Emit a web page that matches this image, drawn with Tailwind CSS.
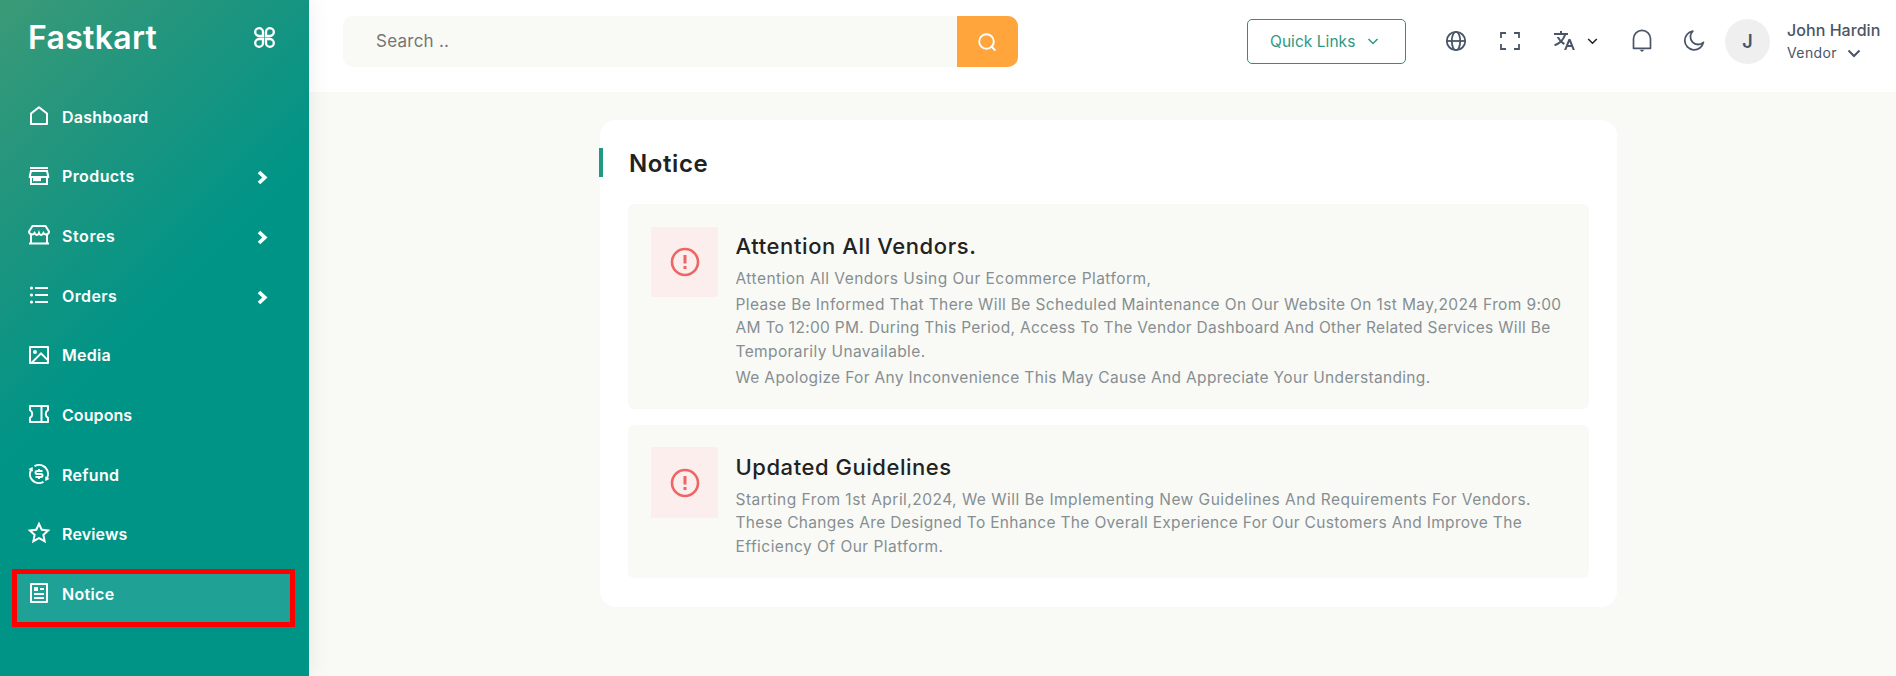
<!DOCTYPE html>
<html lang="en">
<head>
<meta charset="utf-8">
<title>Fastkart</title>
<script src="https://cdn.jsdelivr.net/npm/@tailwindcss/browser@4"></script>
</head>
<body class="font-['Inter',sans-serif]">
<div class="flex h-[676px] w-[1896px] overflow-hidden bg-[#f9faf6]">
  <aside class="relative z-10 h-full w-[309px] shrink-0 bg-[linear-gradient(135deg,#3b9a77_0px,#1e957f_165px,#009487_330px)] text-white shadow-[0_0_22px_rgba(0,0,0,0.08)]">
    <div class="flex h-[75px] items-center pl-[28px] pr-[34px]">
      <span class="text-[32px] leading-none font-semibold tracking-[0.300px]">Fastkart</span>
      <svg class="ml-auto size-[21px]" viewBox="0 0 21 21" fill="none" stroke="currentColor" stroke-width="2.300"><path d="M9 9H5a3.900 3.900 0 1 1 4-4zM12 9h4a3.900 3.900 0 1 0-4-4zM9 12H5a3.900 3.900 0 1 0 4 4zM12 12h4a3.900 3.900 0 1 1-4 4z"/></svg>
    </div>
    <nav class="mt-[12px] text-[16px] font-semibold leading-6">
      <a class="flex h-[59.6px] items-center gap-[11px] pl-[27px]"><svg class="size-6 -mt-px" viewBox="0 0 24 24" fill="currentColor"><path d="M21 20a1 1 0 0 1-1 1H4a1 1 0 0 1-1-1V9.490a1 1 0 0 1 .386-.790l8-6.222a1 1 0 0 1 1.228 0l8 6.222a1 1 0 0 1 .386.790V20zm-2-1V9.978l-7-5.444-7 5.444V19h14z"/></svg><span class="tracking-[0.240px]">Dashboard</span></a>
      <a class="flex h-[59.6px] items-center gap-[11px] pl-[27px]"><svg class="size-6 -mt-px" viewBox="0 0 24 24" fill="none" stroke="currentColor" stroke-width="2"><path d="M3 4h18M4 7h16l1.200 5v1H2.800v-1zM4 13v7h16v-7"/><path fill="currentColor" stroke="none" d="M6 14h8v3.200H6z"/></svg><span class="tracking-[0.400px]">Products</span><svg class="ml-auto mr-[41px] mt-[3px] h-[15px] w-[11px]" viewBox="0 0 11 15" fill="none" stroke="currentColor" stroke-width="3.700"><path d="M2 2l5.800 5.500L2 13"/></svg></a>
      <a class="flex h-[59.6px] items-center gap-[11px] pl-[27px]"><svg class="size-6 -mt-px" viewBox="0 0 24 24" fill="none" stroke="currentColor" stroke-width="2"><path d="M5.500 3h13L22 8.500c0 3-4 4-5.500 1.500-1.200 2.500-3.600 2.500-4.500 0-.9 2.500-3.300 2.500-4.500 0C6 12.500 2 11.500 2 8.500zM4 12v8M20 12v8M2 20.500h20"/></svg><span class="tracking-[0.600px]">Stores</span><svg class="ml-auto mr-[41px] mt-[3px] h-[15px] w-[11px]" viewBox="0 0 11 15" fill="none" stroke="currentColor" stroke-width="3.700"><path d="M2 2l5.800 5.500L2 13"/></svg></a>
      <a class="flex h-[59.6px] items-center gap-[11px] pl-[27px]"><svg class="size-6 -mt-px" viewBox="0 0 24 24" fill="currentColor"><path d="M8 4h13v2H8zM8 11h13v2H8zM8 18h13v2H8z"/><circle cx="4.500" cy="5" r="1.600"/><circle cx="4.500" cy="12" r="1.600"/><circle cx="4.500" cy="19" r="1.600"/></svg><span class="tracking-[0.400px]">Orders</span><svg class="ml-auto mr-[41px] mt-[3px] h-[15px] w-[11px]" viewBox="0 0 11 15" fill="none" stroke="currentColor" stroke-width="3.700"><path d="M2 2l5.800 5.500L2 13"/></svg></a>
      <a class="flex h-[59.6px] items-center gap-[11px] pl-[27px]"><svg class="size-6 -mt-px" viewBox="0 0 24 24" fill="currentColor"><path d="M2.992 21A.993.993 0 0 1 2 20.007V3.993A1 1 0 0 1 2.992 3h18.016c.548 0 .992.445.992.993v16.014a1 1 0 0 1-.992.993H2.992zM20 15V5H4v14L14 9l6 6zm0 2.828l-6-6L6.828 19H20v-1.172zM8 11a2 2 0 1 1 0-4 2 2 0 0 1 0 4z"/></svg><span class="tracking-[0.284px]">Media</span></a>
      <a class="flex h-[59.6px] items-center gap-[11px] pl-[27px]"><svg class="size-6 -mt-px" viewBox="0 0 24 24" fill="none" stroke="currentColor" stroke-width="2" stroke-linejoin="round"><path d="M3 4h18v4.200a4.300 4.300 0 0 0 0 7.600V20H3v-4.200a4.300 4.300 0 0 0 0-7.600zM14.500 4v16"/></svg><span class="tracking-[0.080px]">Coupons</span></a>
      <a class="flex h-[59.6px] items-center gap-[11px] pl-[27px]"><svg class="size-6 -mt-px" viewBox="0 0 24 24" fill="currentColor"><path d="M19.375 15.103A8.001 8.001 0 0 0 8.030 5.053l-.992-1.737A9.996 9.996 0 0 1 17 3.340c4.490 2.592 6.210 8.142 4.117 12.770l1.342.774-4.165 2.214-.165-4.714 1.246.719zM4.625 8.897a8.001 8.001 0 0 0 11.345 10.050l.992 1.737A9.996 9.996 0 0 1 7 20.660C2.510 18.068.790 12.518 2.883 7.890L1.540 7.117l4.165-2.214.165 4.714-1.246-.719zM8.500 14H14a.5.5 0 1 0 0-1h-4a2.500 2.500 0 1 1 0-5h1V7h2v1h2.500v2H10a.5.5 0 1 0 0 1h4a2.500 2.500 0 1 1 0 5h-1v1h-2v-1H8.500v-2z"/></svg><span class="mt-px tracking-[0.300px]">Refund</span></a>
      <a class="flex h-[59.6px] items-center gap-[11px] pl-[27px]"><svg class="size-6 -mt-px" viewBox="0 0 24 24" fill="currentColor"><path d="M12 18.260l-7.053 3.948 1.575-7.928L.588 8.792l8.027-.952L12 .5l3.386 7.340 8.027.952-5.934 5.488 1.575 7.928L12 18.260zm0-2.292l4.247 2.377-.948-4.773 3.573-3.305-4.833-.573L12 5.275l-2.038 4.420-4.833.572 3.573 3.305-.948 4.773L12 15.968z"/></svg><span class="tracking-[0.160px]">Reviews</span></a>
      <a class="relative flex h-[59.6px] items-center gap-[11px] pl-[27px]"><span class="absolute left-[11.5px] top-[5px] h-[58px] w-[283px] border-[5px] border-[#ff0000] bg-white/12"></span><svg class="relative size-6 -mt-px" viewBox="0 0 24 24" fill="currentColor"><path d="M20 22H4a1 1 0 0 1-1-1V3a1 1 0 0 1 1-1h16a1 1 0 0 1 1 1v18a1 1 0 0 1-1 1zm-1-2V4H5v16h14zM7 6h4v4H7V6zm0 6h10v2H7v-2zm0 4h10v2H7v-2zm6-9h4v2h-4V7z"/></svg><span class="relative tracking-[0.340px]">Notice</span></a>
    </nav>
  </aside>
  <div class="flex min-w-0 flex-1 flex-col">
    <header class="flex h-[92px] shrink-0 items-start bg-white pt-4 text-[#4a5568]">
      <div class="ml-[34px] flex h-[51px] w-[675px] overflow-hidden rounded-[10px] bg-[#f9faf6]">
        <div class="flex flex-1 items-center pl-[33px] text-[17px] tracking-[0.250px] text-[#757575]">Search ..</div>
        <div class="flex w-[61px] items-center justify-center bg-[#ffa53b] pr-px text-white"><svg class="size-5" viewBox="0 0 20 20" fill="none" stroke="currentColor" stroke-width="1.900" stroke-linecap="round"><circle cx="9.500" cy="9.500" r="7.300"/><path d="M14.500 14.500l3.300 3.500"/></svg></div>
      </div>
      <div class="mt-[3px] ml-[229px] flex h-[45px] items-center">
        <div class="flex h-[45px] w-[159px] items-center rounded-[5px] border border-[#1f9683] pl-[22px] text-[15.500px] text-[#2d9884]"><span class="tracking-[0.050px]">Quick Links</span><svg class="ml-[12px] h-[7px] w-[12px]" viewBox="0 0 12 7" fill="none" stroke="currentColor" stroke-width="1.500"><path d="M1.500 1L6 5.500 10.500 1"/></svg></div>
        <svg class="ml-[39px] size-[22px] -mt-px" viewBox="0 0 22 22" fill="none" stroke="currentColor" stroke-width="1.800"><circle cx="11" cy="11" r="9.200"/><ellipse cx="11" cy="11" rx="4.200" ry="9.200"/><path d="M2 11h18"/></svg>
        <svg class="ml-[31px] size-[24px] -mt-px" viewBox="0 0 24 24" fill="none" stroke="currentColor" stroke-width="1.800"><path d="M8 4H3v5M16 4h5v5M8 20H3v-5M16 20h5v-5"/></svg>
        <svg class="ml-[30px] size-6 -mt-px" viewBox="0 0 24 24" fill="currentColor"><path d="M18.500 10l4.400 11h-2.155l-1.201-3h-4.090l-1.199 3h-2.154L16.500 10h2zM10 2v2h6v2h-1.968a18.222 18.222 0 0 1-3.620 6.301 14.864 14.864 0 0 0 2.336 1.707l-.751 1.878A17.015 17.015 0 0 1 9 13.725a16.676 16.676 0 0 1-6.201 3.548l-.536-1.929a14.700 14.700 0 0 0 5.327-3.042A18.078 18.078 0 0 1 4.767 8h2.240A16.032 16.032 0 0 0 9 10.877a16.165 16.165 0 0 0 2.910-4.876L2 6V4h6V2h2zm7.500 10.885L16.253 16h2.492L17.500 12.885z"/></svg>
        <svg class="ml-[11px] h-[7px] w-[11px] -mt-px" viewBox="0 0 11 7" fill="none" stroke="#222" stroke-width="1.500"><path d="M1.200 1l4.300 4.300L9.800 1"/></svg>
        <svg class="ml-[32px] size-6 -mt-px" viewBox="0 0 24 24" fill="none" stroke="currentColor" stroke-width="1.700" stroke-linejoin="round"><path d="M3.500 19.300v-9.500a8.500 8.500 0 0 1 17 0v9.500z"/><path d="M9.500 20.800h5L12 23z" fill="currentColor" stroke="none"/></svg>
        <svg class="ml-[28px] size-6 -mt-px" viewBox="0 0 24 24" fill="none" stroke="currentColor" stroke-width="1.800" stroke-linejoin="round"><path d="M10.800 2.200a9.400 9.400 0 1 0 10.600 11.200A7.500 7.500 0 0 1 10.800 2.200z"/></svg>
        <div class="ml-[19px] flex size-[45px] items-center justify-center rounded-full bg-[#efefef] text-[18px] font-semibold">J</div>
        <div class="ml-[17px] mt-px flex flex-col">
          <span class="text-[16px] leading-[22px] font-medium tracking-[0.050px]">John Hardin</span>
          <span class="flex items-center text-[14px] leading-[24px]"><span class="tracking-[0.400px]">Vendor</span><svg class="ml-[10px] h-[9px] w-[14px]" viewBox="0 0 14 9" fill="none" stroke="currentColor" stroke-width="2"><path d="M1.500 1.500L7 7l5.500-5.500"/></svg></span>
        </div>
      </div>
    </header>
    <main class="flex flex-1 pt-[28px] pl-[291px]">
      <section class="relative h-[487px] w-[1017px] rounded-2xl bg-white px-[28px] pt-[28px]">
        <span class="absolute -left-px top-[28px] h-[29px] w-1 bg-[#1f9983]"></span>
        <h1 class="ml-px text-[24px] leading-[31px] font-semibold tracking-[0.600px] text-[#222]">Notice</h1>
        <article class="mt-[25px] flex h-[205px] w-[961px] gap-[17.5px] rounded-md bg-[#f9faf6] p-[23px]">
          <div class="flex h-[70px] w-[67px] shrink-0 items-center justify-center bg-[#fbeeec]"><svg class="size-[30px]" viewBox="0 0 30 30" fill="none" stroke="#ed6565" stroke-width="2.600"><circle cx="15" cy="15" r="13"/><path stroke-width="3" d="M15 8v8.500M15 19v3"/></svg></div>
          <div class="pt-[5px] whitespace-nowrap">
            <h2 class="text-[22px] leading-[28px] font-medium tracking-[0.597px] text-[#222]">Attention All Vendors.</h2>
            <div class="mt-[7px] text-[15.500px] leading-[23.400px] text-[#868e92]">
              <p class="tracking-[0.459px]">Attention All Vendors Using Our Ecommerce Platform,</p>
              <p class="mt-[2.500px]"><span class="tracking-[0.368px]">Please Be Informed That There Will Be Scheduled Maintenance On Our Website On 1st May,2024 From 9:00</span><br><span class="tracking-[0.307px]">AM To 12:00 PM. During This Period, Access To The Vendor Dashboard And Other Related Services Will Be</span><br><span class="tracking-[0.378px]">Temporarily Unavailable.</span></p>
              <p class="mt-[2.500px] tracking-[0.329px]">We Apologize For Any Inconvenience This May Cause And Appreciate Your Understanding.</p>
            </div>
          </div>
        </article>
        <article class="mt-4 flex h-[153px] w-[961px] gap-[17.5px] rounded-md bg-[#f9faf6] px-[23px] pt-[22px]">
          <div class="flex h-[71px] w-[67px] shrink-0 items-center justify-center bg-[#fbeeec]"><svg class="size-[30px]" viewBox="0 0 30 30" fill="none" stroke="#ed6565" stroke-width="2.600"><circle cx="15" cy="15" r="13"/><path stroke-width="3" d="M15 8v8.500M15 19v3"/></svg></div>
          <div class="pt-[6px] whitespace-nowrap">
            <h2 class="text-[22px] leading-[28px] font-medium tracking-[0.540px] text-[#222]">Updated Guidelines</h2>
            <p class="mt-[7px] text-[15.500px] leading-[23.400px] text-[#868e92]"><span class="tracking-[0.475px]">Starting From 1st April,2024, We Will Be Implementing New Guidelines And Requirements For Vendors.</span><br><span class="tracking-[0.322px]">These Changes Are Designed To Enhance The Overall Experience For Our Customers And Improve The</span><br><span class="tracking-[0.471px]">Efficiency Of Our Platform.</span></p>
          </div>
        </article>
      </section>
    </main>
  </div>
</div>
</body>
</html>
